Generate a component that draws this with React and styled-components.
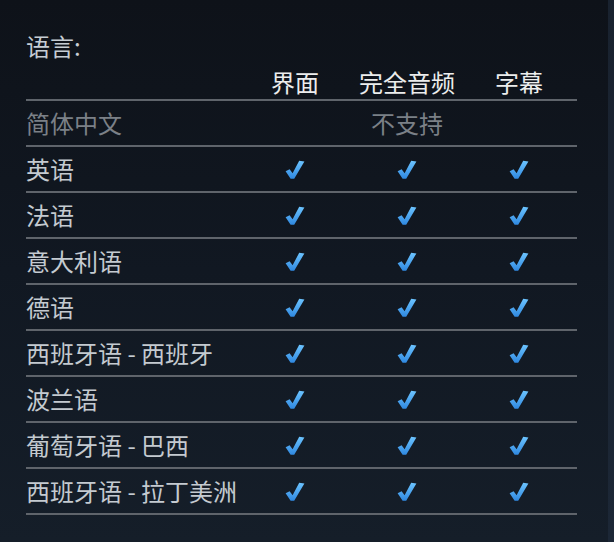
import React from 'react';
import styled, { createGlobalStyle } from 'styled-components';

const GlobalStyle = createGlobalStyle`
  html, body {
    margin: 0;
    padding: 0;
    background: #10151d;
  }
  body {
    font-family: "Noto Sans CJK SC", "Noto Sans", sans-serif;
  }
`;

const columns = ['界面', '完全音频', '字幕'];

const languages = [
  { name: '简体中文', supported: false },
  { name: '英语', supported: true },
  { name: '法语', supported: true },
  { name: '意大利语', supported: true },
  { name: '德语', supported: true },
  { name: '西班牙语 - 西班牙', supported: true },
  { name: '波兰语', supported: true },
  { name: '葡萄牙语 - 巴西', supported: true },
  { name: '西班牙语 - 拉丁美洲', supported: true },
];

const CheckIcon = () => (
  <svg width="20" height="20" viewBox="0 0 20 20">
    <defs>
      <linearGradient id="chk" x1="0" y1="0" x2="0" y2="1">
        <stop offset="0" stopColor="#6cc4ff" />
        <stop offset="1" stopColor="#2f88e0" />
      </linearGradient>
    </defs>
    <path
      d="M0.6 11.2 L4.6 9.2 L7.6 13.2 L14.2 0.8 L19.4 1.4 L9.2 18.8 L5.6 18.8 Z"
      fill="url(#chk)"
    />
  </svg>
);

const App = () => {
  return (
    <Page>
      <GlobalStyle />
      <Panel>
        <Title>语言:</Title>
        <Table>
          <HeaderRow>
            <span />
            {columns.map(col => (
              <HeaderCell key={col}>{col}</HeaderCell>
            ))}
          </HeaderRow>
          {languages.map(lang => (
            <Row key={lang.name}>
              <LangName $dim={!lang.supported}>{lang.name}</LangName>
              {lang.supported ? (
                columns.map(col => (
                  <Cell key={col}>
                    <CheckIcon />
                  </Cell>
                ))
              ) : (
                <Unsupported>不支持</Unsupported>
              )}
            </Row>
          ))}
        </Table>
      </Panel>
      <Edge />
    </Page>
  );
};

const Page = styled.div`
  display: flex;
  width: 614px;
  height: 542px;
  background: linear-gradient(to bottom, #0e1219 0%, #111822 50%, #151e29 100%);
`;

const Panel = styled.div`
  flex: 1;
  padding: 31px 0 0 26px;
`;

const Edge = styled.div`
  width: 6px;
  background: linear-gradient(to bottom, #19222f, #1c2736);
`;

const Title = styled.div`
  color: #c6cdd4;
  font-size: 24px;
  line-height: 30px;
`;

const Table = styled.div`
  width: 551px;
`;

const RowBase = styled.div`
  display: grid;
  grid-template-columns: 213px 112px 112px 112px;
  align-items: center;
  border-bottom: 2px solid #5f646b;
`;

const HeaderRow = styled(RowBase)`
  padding: 6px 0 2px;
  height: 30px;
`;

const HeaderCell = styled.div`
  color: #eceded;
  font-size: 24px;
  line-height: 30px;
  text-align: center;
`;

const Row = styled(RowBase)`
  height: 44px;
`;

const LangName = styled.div`
  color: ${p => (p.$dim ? '#7b8087' : '#c4cad0')};
  font-size: 24px;
  line-height: 30px;
  white-space: nowrap;
`;

const Cell = styled.div`
  display: flex;
  justify-content: center;
  align-items: center;
  padding-top: 2px;
`;

const Unsupported = styled.div`
  grid-column: 2 / span 3;
  color: #7b8087;
  font-size: 24px;
  line-height: 30px;
  text-align: center;
`;

export default App;
